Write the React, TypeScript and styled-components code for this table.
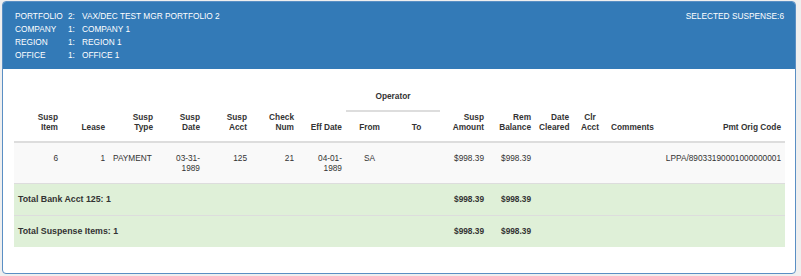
import React from "react";
import styled, { createGlobalStyle } from "styled-components";

const GlobalStyle = createGlobalStyle`
  html, body {
    margin: 0;
    padding: 0;
    background: #efefef;
  }
  body {
    font-family: "Liberation Sans", Arial, sans-serif;
    color: #333;
  }
`;

const Page = styled.div`
  padding: 1px 5px 3px 2px;
`;

const Panel = styled.div`
  border: 1px solid #5a8fc4;
  border-radius: 4px;
  background: #fff;
  overflow: hidden;
`;

const Header = styled.div`
  background: #337ab7;
  color: #fff;
  padding: 8px 11px 7px 12px;
  display: flex;
  justify-content: space-between;
  align-items: flex-start;
  font-size: 8.3px;
  line-height: 13px;
`;

const InfoGrid = styled.div`
  display: grid;
  grid-template-columns: 53px 14px auto;
`;

const Selected = styled.div`
  font-size: 8.3px;
`;

const Body = styled.div`
  padding: 12px 9px 26px 11px;
`;

const Table = styled.table`
  width: 771px;
  table-layout: fixed;
  border-collapse: collapse;
  font-size: 8.3px;
  line-height: 10px;
  color: #333;
`;

type Align = "left" | "right" | "center";

const Th = styled.th<{ $align?: Align }>`
  font-weight: bold;
  text-align: ${(p) => p.$align ?? "right"};
  vertical-align: bottom;
  padding: 10px 4px 9px;
  border-bottom: 2px solid #ddd;
  white-space: nowrap;
`;

const GroupTh = styled.th`
  font-weight: bold;
  text-align: center;
  vertical-align: bottom;
  padding: 10px 4px 9px;
  border-bottom: 2px solid #ddd;
`;

const DataRow = styled.tr`
  background: #f9f9f9;
`;

const Td = styled.td<{ $align?: Align }>`
  text-align: ${(p) => p.$align ?? "right"};
  vertical-align: top;
  padding: 10px 4px 10px;
  border-top: 1px solid #ddd;
`;

const TotalRow = styled.tr`
  background: #dff0d8;
`;

const TotalTd = styled.td<{ $align?: Align; $label?: boolean }>`
  text-align: ${(p) => p.$align ?? "right"};
  font-weight: bold;
  font-size: ${(p) => (p.$label ? "8.8px" : "8.3px")};
  vertical-align: top;
  padding: 10px 4px 11px;
  border-top: 1px solid #ddd;
`;

const widths = [48, 47, 48, 47, 47, 47, 48, 47, 47, 48, 47, 38, 34, 51, 127];

const info = [
  ["PORTFOLIO", "2:", "VAX/DEC TEST MGR PORTFOLIO 2"],
  ["COMPANY", "1:", "COMPANY 1"],
  ["REGION", "1:", "REGION 1"],
  ["OFFICE", "1:", "OFFICE 1"],
];

const totals = [
  { label: "Total Bank Acct 125: 1", amt: "$998.39", rem: "$998.39" },
  { label: "Total Suspense Items: 1", amt: "$998.39", rem: "$998.39" },
];

export default function App() {
  return (
    <>
      <GlobalStyle />
      <Page>
        <Panel>
          <Header>
            <InfoGrid>
              {info.map(([l, n, v]) => (
                <React.Fragment key={l}>
                  <span>{l}</span>
                  <span>{n}</span>
                  <span>{v}</span>
                </React.Fragment>
              ))}
            </InfoGrid>
            <Selected>SELECTED SUSPENSE:6</Selected>
          </Header>
          <Body>
            <Table>
              <colgroup>
                {widths.map((w, i) => (
                  <col key={i} style={{ width: w }} />
                ))}
              </colgroup>
              <thead>
                <tr>
                  <Th rowSpan={2}>Susp<br />Item</Th>
                  <Th rowSpan={2}>Lease</Th>
                  <Th rowSpan={2}>Susp<br />Type</Th>
                  <Th rowSpan={2}>Susp<br />Date</Th>
                  <Th rowSpan={2}>Susp<br />Acct</Th>
                  <Th rowSpan={2}>Check<br />Num</Th>
                  <Th rowSpan={2}>Eff Date</Th>
                  <GroupTh colSpan={2}>Operator</GroupTh>
                  <Th rowSpan={2}>Susp<br />Amount</Th>
                  <Th rowSpan={2}>Rem<br />Balance</Th>
                  <Th rowSpan={2}>Date<br />Cleared</Th>
                  <Th rowSpan={2} $align="center">Clr<br />Acct</Th>
                  <Th rowSpan={2} $align="left">Comments</Th>
                  <Th rowSpan={2}>Pmt Orig Code</Th>
                </tr>
                <tr>
                  <Th $align="center">From</Th>
                  <Th $align="center">To</Th>
                </tr>
              </thead>
              <tbody>
                <DataRow>
                  <Td>6</Td>
                  <Td>1</Td>
                  <Td $align="left">PAYMENT</Td>
                  <Td>03-31-1989</Td>
                  <Td>125</Td>
                  <Td>21</Td>
                  <Td>04-01-1989</Td>
                  <Td $align="center">SA</Td>
                  <Td $align="center"></Td>
                  <Td>$998.39</Td>
                  <Td>$998.39</Td>
                  <Td></Td>
                  <Td></Td>
                  <Td></Td>
                  <Td>LPPA/89033190001000000001</Td>
                </DataRow>
                {totals.map((t) => (
                  <TotalRow key={t.label}>
                    <TotalTd colSpan={9} $align="left" $label>{t.label}</TotalTd>
                    <TotalTd>{t.amt}</TotalTd>
                    <TotalTd>{t.rem}</TotalTd>
                    <TotalTd colSpan={4}></TotalTd>
                  </TotalRow>
                ))}
              </tbody>
            </Table>
          </Body>
        </Panel>
      </Page>
    </>
  );
}
